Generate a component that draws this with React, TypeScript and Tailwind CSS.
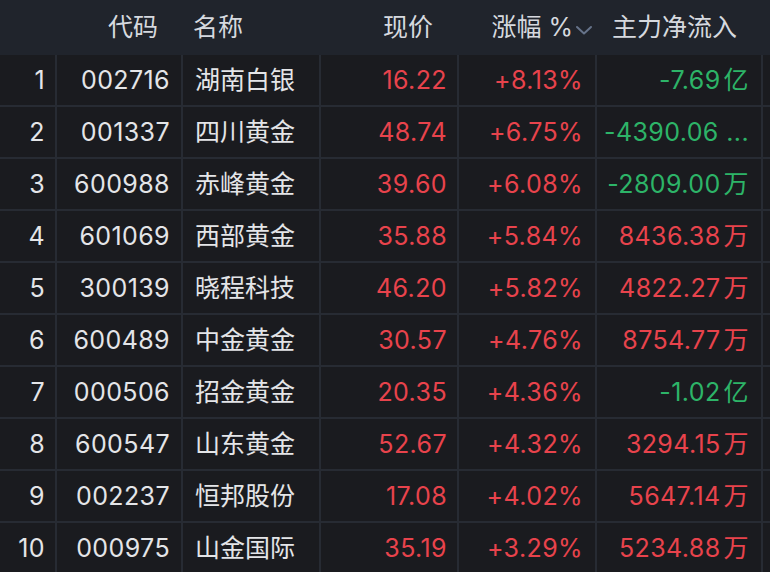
import { ReactNode } from 'react';

type Row = {
  rank: number;
  code: string;
  name: string;
  price: string;
  change: string;
  flow: string;
  unit: string;
  up: boolean;
};

const ROWS: Row[] = [
  { rank: 1, code: '002716', name: '湖南白银', price: '16.22', change: '+8.13%', flow: '-7.69', unit: '亿', up: false },
  { rank: 2, code: '001337', name: '四川黄金', price: '48.74', change: '+6.75%', flow: '-4390.06 ...', unit: '', up: false },
  { rank: 3, code: '600988', name: '赤峰黄金', price: '39.60', change: '+6.08%', flow: '-2809.00', unit: '万', up: false },
  { rank: 4, code: '601069', name: '西部黄金', price: '35.88', change: '+5.84%', flow: '8436.38', unit: '万', up: true },
  { rank: 5, code: '300139', name: '晓程科技', price: '46.20', change: '+5.82%', flow: '4822.27', unit: '万', up: true },
  { rank: 6, code: '600489', name: '中金黄金', price: '30.57', change: '+4.76%', flow: '8754.77', unit: '万', up: true },
  { rank: 7, code: '000506', name: '招金黄金', price: '20.35', change: '+4.36%', flow: '-1.02', unit: '亿', up: false },
  { rank: 8, code: '600547', name: '山东黄金', price: '52.67', change: '+4.32%', flow: '3294.15', unit: '万', up: true },
  { rank: 9, code: '002237', name: '恒邦股份', price: '17.08', change: '+4.02%', flow: '5647.14', unit: '万', up: true },
  { rank: 10, code: '000975', name: '山金国际', price: '35.19', change: '+3.29%', flow: '5234.88', unit: '万', up: true },
];

const FONT = '[font-family:Inter,"Noto_Sans_CJK_SC",sans-serif]';

const Cell = ({ className, children }: { className: string; children?: ReactNode }) => (
  <div className={`flex items-center h-full pt-[2px] border-r-2 border-[#272b33] whitespace-nowrap overflow-hidden ${className}`}>
    {children}
  </div>
);

const Chevron = () => (
  <svg width="18" height="12" viewBox="0 0 18 12" className="ml-[2px] mt-[4px]">
    <path d="M2 3 L9 9.5 L16 3" fill="none" stroke="#66738a" strokeWidth="2" strokeLinecap="round" strokeLinejoin="round" />
  </svg>
);

export default function App() {
  return (
    <div className={`w-[770px] h-[572px] overflow-hidden bg-[#1a1b1f] text-[25px] ${FONT}`}>
      <div className="flex h-[55px] pt-[1px] bg-[#20242c] text-[#d6d9df]">
        <div className="w-[57px]" />
        <div className="w-[126px] flex items-center justify-end pr-[25px]">代码</div>
        <div className="w-[138px] flex items-center pl-[10px]">名称</div>
        <div className="w-[138px] flex items-center justify-end pr-[26px]">现价</div>
        <div className="w-[138px] flex items-center justify-end pr-[4px]">
          涨幅 %<Chevron />
        </div>
        <div className="w-[166px] flex items-center justify-end pr-[26px]">主力净流入</div>
        <div className="flex-1" />
      </div>
      {ROWS.map((r) => (
        <div key={r.rank} className="flex h-[52px] border-b-2 border-[#272b33] tracking-[0.4px]">
          <Cell className="w-[57px] justify-end pr-[10px] text-[#e4e5e8]">{r.rank}</Cell>
          <Cell className="w-[126px] justify-end pr-[11px] text-[#e4e5e8]">{r.code}</Cell>
          <Cell className="w-[138px] pl-[12px] text-[#e4e5e8] tracking-normal">{r.name}</Cell>
          <Cell className="w-[138px] justify-end pr-[10px] text-[#e8434c]">{r.price}</Cell>
          <Cell className="w-[138px] justify-end pr-[12px] text-[#e8434c]">{r.change}</Cell>
          <Cell className={`w-[166px] justify-end pr-[12px] ${r.up ? 'text-[#e8434c]' : 'text-[#2db468]'}`}>
            {r.flow}
            {r.unit && <span className="ml-[3px]">{r.unit}</span>}
          </Cell>
          <div className="flex-1" />
        </div>
      ))}
    </div>
  );
}
